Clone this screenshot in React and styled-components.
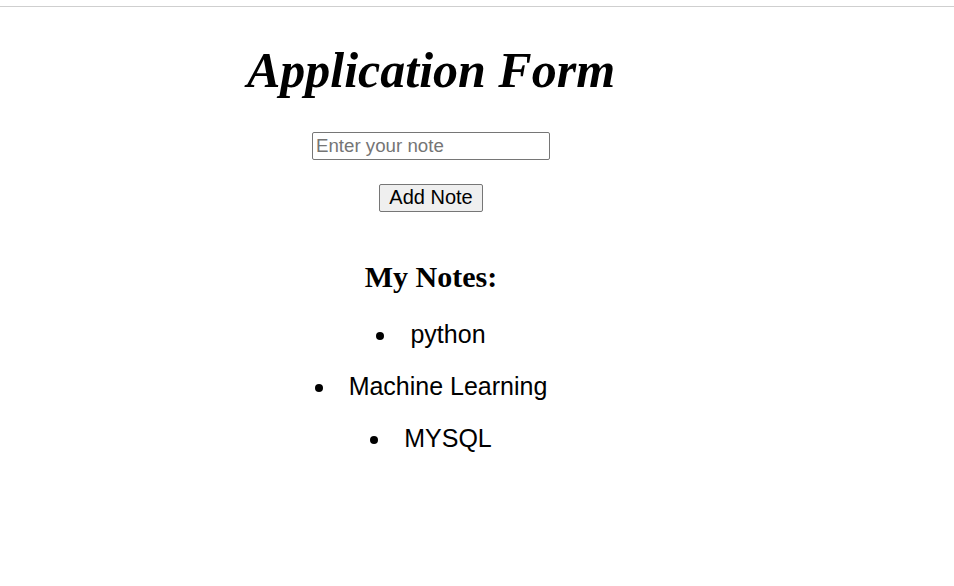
import React, { useState } from "react";
import styled, { createGlobalStyle } from "styled-components";

const GlobalStyle = createGlobalStyle`
  body {
    margin: 0;
    background: #ffffff;
    font-family: "Liberation Sans", Arial, sans-serif;
    color: #000000;
  }
`;

const TopRule = styled.div`
  margin-top: 6px;
  height: 1px;
  background: #cfcfcf;
`;

const Wrapper = styled.div`
  width: 862px;
  display: flex;
  flex-direction: column;
  align-items: center;
  text-align: center;
`;

const Title = styled.h1`
  font-family: "Liberation Serif", "Times New Roman", serif;
  font-style: italic;
  font-weight: bold;
  font-size: 50px;
  margin: 35px 0 0;
  line-height: 1.15;
`;

const NoteInput = styled.input`
  margin-top: 32px;
  width: 238px;
  height: 28px;
  box-sizing: border-box;
  font-family: "Liberation Sans", Arial, sans-serif;
  font-size: 18.7px;
  padding: 1px 3px;
  border: 1px solid #767676;
  border-radius: 2px;
  ::placeholder {
    color: #757575;
  }
`;

const AddButton = styled.button`
  margin-top: 24px;
  height: 28px;
  box-sizing: border-box;
  font-family: "Liberation Sans", Arial, sans-serif;
  font-size: 20px;
  padding: 0 9px;
  background: #efefef;
  border: 1px solid #767676;
  border-radius: 2px;
  color: #000;
`;

const NotesHeading = styled.h2`
  font-family: "Liberation Serif", "Times New Roman", serif;
  font-weight: bold;
  font-size: 30px;
  margin: 48px 0 0;
`;

const NoteList = styled.ul`
  list-style-position: inside;
  padding: 0;
  margin: 14px 0 0;
`;

const NoteItem = styled.li`
  font-size: 25px;
  line-height: 52px;
`;

export default function App() {
  const [note, setNote] = useState("");
  const [notes, setNotes] = useState(["python", "Machine Learning", "MYSQL"]);

  const addNote = () => {
    if (!note.trim()) return;
    setNotes([...notes, note.trim()]);
    setNote("");
  };

  return (
    <>
      <GlobalStyle />
      <TopRule />
      <Wrapper>
        <Title>Application Form</Title>
        <NoteInput
          placeholder="Enter your note"
          value={note}
          onChange={(e) => setNote(e.target.value)}
        />
        <AddButton onClick={addNote}>Add Note</AddButton>
        <NotesHeading>My Notes:</NotesHeading>
        <NoteList>
          {notes.map((n, i) => (
            <NoteItem key={i}>{n}</NoteItem>
          ))}
        </NoteList>
      </Wrapper>
    </>
  );
}
